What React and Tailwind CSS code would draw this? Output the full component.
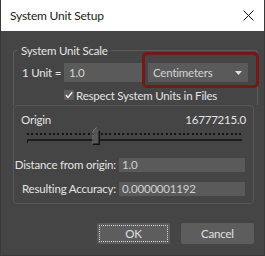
const Slider = () => {
  const dots = [];
  for (let i = 0; i < 50; i++) {
    dots.push(<rect key={i} x={Math.round(i * 4.33)} y={6} width={2} height={2} fill="#141414" />);
  }
  return (
    <svg width="216" height="18" viewBox="0 0 216 18" className="block">
      {dots}
      <rect x="0" y="12" width="215" height="2" fill="#1c1c1c" />
      <rect x="0" y="12" width="1" height="4" fill="#1c1c1c" />
      <path d="M67 17 L67 4 L69.5 1 L72 4 L72 17 Z" fill="#565656" />
      <path d="M66 17 L66 4 L69.5 0.5" stroke="#7a7a7a" strokeWidth="1" fill="none" />
      <path d="M73 4 L73 18 L66 18 L66 16.5 L71.5 16.5 L71.5 4 Z" fill="#111" />
    </svg>
  );
};

const App = () => {
  return (
    <div
      className="w-[265px] h-[256px] flex flex-col bg-[#454545] text-[11.5px] tracking-[-0.2px] leading-[15px] text-[#e4e4e4] whitespace-nowrap overflow-hidden border-x border-b border-[#3a3a3a]"
      style={{ fontFamily: 'Lato, "Liberation Sans", sans-serif' }}
    >
      <div className="h-[31px] shrink-0 bg-white flex items-center justify-between pl-[9px] pr-[10px] text-[#1a1a1a]">
        <span className="text-[12px]">System Unit Setup</span>
        <svg width="11" height="11" viewBox="0 0 11 11">
          <path d="M0.5 0.5 L10.5 10.5 M10.5 0.5 L0.5 10.5" stroke="#111" strokeWidth="1" />
        </svg>
      </div>

      <div className="flex-1 flex flex-col pt-[12px]">
        <fieldset className="ml-[12px] w-[245px] border border-b-0 border-[#5d5d5d] rounded-t-[3px] pb-[3px]">
          <legend className="ml-[4px] px-[3px] h-[15px]">System Unit Scale</legend>
          <div className="flex items-center mt-[5px] h-[19px]">
            <span className="pl-[8px] w-[50px]">1 Unit =</span>
            <div className="w-[80px] h-[19px] bg-[#5a5a5a] flex items-center pl-[5px] text-[#d4d4d4]">1.0</div>
            <div className="relative ml-[4px] w-[100px] h-[19px] bg-[#5a5a5a] flex items-center justify-between pl-[5px] pr-[6px] text-[#d4d4d4]">
              <span>Centimeters</span>
              <svg width="7" height="4" viewBox="0 0 7 4">
                <path d="M0 0 L7 0 L3.5 4 Z" fill="#e0e0e0" />
              </svg>
              <div className="absolute -left-[6px] -top-[11px] w-[117px] h-[36px] border-[3px] border-[#741818] rounded-[5px]" />
            </div>
          </div>
          <div className="flex items-center mt-[6px] h-[14px] ml-[50px]">
            <div className="w-[10px] h-[10px] bg-[#5e5e5e] flex items-center justify-center">
              <svg width="8" height="8" viewBox="0 0 8 8">
                <path d="M0.8 4 L3 6.4 L7.2 1.2" stroke="#eee" strokeWidth="1.5" fill="none" />
              </svg>
            </div>
            <span className="ml-[2px]">Respect System Units in Files</span>
          </div>
        </fieldset>

        <div className="ml-[12px] w-[241px] border border-[#575757] rounded-[4px] pt-[6px] pb-[7px]">
          <div className="flex justify-between h-[14px] items-center px-[7px]">
            <span>Origin</span>
            <span>16777215.0</span>
          </div>
          <div className="ml-[13px] mt-[1px]">
            <Slider />
          </div>
          <div className="grid grid-cols-[102px_126px] gap-x-[3px] gap-y-[9px] mt-[12px] items-center">
            <span className="text-right">Distance from origin:</span>
            <div className="h-[14px] bg-[#5a5a5a] flex items-center pl-[3px] text-[#d0d0d0]">1.0</div>
            <span className="text-right">Resulting Accuracy:</span>
            <div className="h-[14px] bg-[#5a5a5a] flex items-center pl-[3px] text-[#d0d0d0]">0.0000001192</div>
          </div>
        </div>

        <div className="flex justify-end gap-[11px] pr-[10px] mt-[19px]">
          <button className="w-[73px] h-[21px] bg-[#5d5d5d] rounded-[2px] p-[2px] text-[#e0e0e0]">
            <div className="w-full h-full border border-dotted border-[#d8d8d8] flex items-center justify-center">OK</div>
          </button>
          <button className="w-[73px] h-[21px] bg-[#5d5d5d] rounded-[2px] text-[#e0e0e0] flex items-center justify-center">
            Cancel
          </button>
        </div>
      </div>
    </div>
  );
};

export default App;
